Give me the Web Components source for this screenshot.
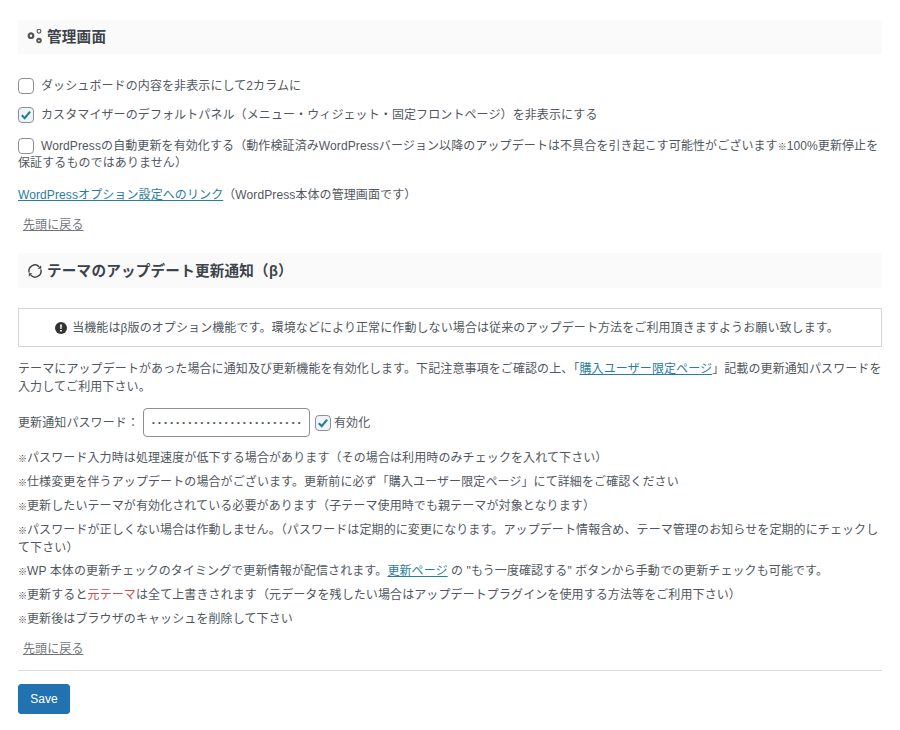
<!DOCTYPE html>
<html lang="ja">
<head>
<meta charset="utf-8">
<title>管理画面</title>
<style>
  body {
    margin: 0;
    padding: 20px 18px 0;
    background: #fff;
    color: #50575e;
    font: 12px/18px "Liberation Sans", "Noto Sans CJK JP", sans-serif;
    letter-spacing: .1px;
  }
  a { color: #2b7d9b; }
  .red { color: #c9504f; }
  .mark { font-size: 9px; line-height: 0; font-weight: 700; letter-spacing: 0; color: #444; }
  section-title[second] { margin-top: 19px; height: 35px; }
  .para { margin: 14px 0 0; }
  .list { margin: 12px 0 0; }
  .list p { margin: 0 0 6px; }
  .list p.wrap { margin-bottom: 5px; }
  .intro { margin: 13px 0 0; }
</style>
</head>
<body>

<section-title>
  <svg slot="icon" width="16" height="16" viewBox="0 0 16 16">
    <g fill="none" stroke="#555">
      <circle cx="4" cy="6.7" r="2.3" stroke-width="2.2"/>
      <circle cx="12" cy="2.2" r="1.9" stroke-width="1.1"/>
      <circle cx="12" cy="11.6" r="1.8" stroke-width="1.9"/>
    </g>
  </svg>
  管理画面
</section-title>

<check-row style="margin-top:23px">ダッシュボードの内容を非表示にして2カラムに</check-row>
<check-row checked style="margin-top:11px">カスタマイザーのデフォルトパネル（メニュー・ウィジェット・固定フロントページ）を非表示にする</check-row>
<check-row style="margin-top:14px;line-height:17px">WordPressの自動更新を有効化する（動作検証済みWordPressバージョン以降のアップデートは不具合を引き起こす可能性がございます<span class="mark">※</span>100%更新停止を保証するものではありません）</check-row>

<p class="para"><a href="#">WordPressオプション設定へのリンク</a>（WordPress本体の管理画面です）</p>
<back-link style="margin-top:12px"></back-link>

<section-title second>
  <svg slot="icon" width="16" height="16" viewBox="0 0 16 16">
    <g fill="none" stroke="#444" stroke-width="1.4">
      <path d="M2.2 9.6A6 6 0 0 1 12.2 3.7"/>
      <path d="M13.8 6.4A6 6 0 0 1 3.8 12.3"/>
    </g>
    <path d="M14.2 2.2v3.6h-3.6zM1.8 13.8v-3.6h3.6z" fill="#444"/>
  </svg>
  テーマのアップデート更新通知（β）
</section-title>

<notice-box>当機能はβ版のオプション機能です。環境などにより正常に作動しない場合は従来のアップデート方法をご利用頂きますようお願い致します。</notice-box>

<p class="intro">テーマにアップデートがあった場合に通知及び更新機能を有効化します。下記注意事項をご確認の上、「<a href="#">購入ユーザー限定ページ</a>」記載の更新通知パスワードを入力してご利用下さい。</p>

<password-row>更新通知パスワード：</password-row>

<div class="list">
  <p><span class="mark">※</span>パスワード入力時は処理速度が低下する場合があります（その場合は利用時のみチェックを入れて下さい）</p>
  <p><span class="mark">※</span>仕様変更を伴うアップデートの場合がございます。更新前に必ず「購入ユーザー限定ページ」にて詳細をご確認ください</p>
  <p><span class="mark">※</span>更新したいテーマが有効化されている必要があります（子テーマ使用時でも親テーマが対象となります）</p>
  <p class="wrap"><span class="mark">※</span>パスワードが正しくない場合は作動しません。（パスワードは定期的に変更になります。アップデート情報含め、テーマ管理のお知らせを定期的にチェックして下さい）</p>
  <p><span class="mark">※</span>WP 本体の更新チェックのタイミングで更新情報が配信されます。<a href="#">更新ページ</a> の "もう一度確認する" ボタンから手動での更新チェックも可能です。</p>
  <p><span class="mark">※</span>更新すると<span class="red">元テーマ</span>は全て上書きされます（元データを残したい場合はアップデートプラグインを使用する方法等をご利用下さい）</p>
  <p><span class="mark">※</span>更新後はブラウザのキャッシュを削除して下さい</p>
</div>

<back-link style="margin-top:12px"></back-link>
<save-bar></save-bar>

<script>
window.customElements.define('section-title', class extends HTMLElement {
  constructor() {
    super();

    const shadowRoot = this.attachShadow({mode: 'open'});
    shadowRoot.innerHTML = `
      <style>
        :host {
          display: flex;
          align-items: center;
          gap: 4px;
          height: 34px;
          padding-left: 9px;
          background: #fafafa;
          color: #3c434a;
          font-size: 14.6px;
          font-weight: 700;
          letter-spacing: .2px;
        }
        ::slotted(svg) { flex: none; }
      </style>
      <slot name="icon"></slot>
      <slot></slot>
    `;
  }
});

window.customElements.define('check-box', class extends HTMLElement {
  constructor() {
    super();

    const shadowRoot = this.attachShadow({mode: 'open'});
    shadowRoot.innerHTML = `
      <style>
        :host {
          display: inline-block;
          box-sizing: border-box;
          width: 16px;
          height: 16px;
          border: 1px solid #8c8f94;
          border-radius: 4px;
          background: #fff;
          vertical-align: -4px;
        }
        :host([checked]) { background: #eef4f7; }
        svg { display: none; width: 14px; height: 14px; }
        :host([checked]) svg { display: block; }
      </style>
      <svg viewBox="0 0 14 14"><path d="M2.8 7.2l2.9 3 5.4-6.6" fill="none" stroke="#2a7c96" stroke-width="2.2"/></svg>
    `;
  }
});

window.customElements.define('check-row', class extends HTMLElement {
  constructor() {
    super();

    const checked = this.hasAttribute('checked') ? 'checked' : '';
    const shadowRoot = this.attachShadow({mode: 'open'});
    shadowRoot.innerHTML = `
      <style>
        :host { display: block; }
        check-box { margin-right: 7px; }
      </style>
      <check-box ${checked}></check-box><slot></slot>
    `;
  }
});

window.customElements.define('back-link', class extends HTMLElement {
  constructor() {
    super();

    const shadowRoot = this.attachShadow({mode: 'open'});
    shadowRoot.innerHTML = `
      <style>
        :host { display: block; padding-left: 5px; }
        a { color: #72777c; }
      </style>
      <a href="#">先頭に戻る</a>
    `;
  }
});

window.customElements.define('notice-box', class extends HTMLElement {
  constructor() {
    super();

    const shadowRoot = this.attachShadow({mode: 'open'});
    shadowRoot.innerHTML = `
      <style>
        :host {
          display: flex;
          justify-content: center;
          align-items: center;
          gap: 5px;
          box-sizing: border-box;
          height: 39px;
          margin-top: 20px;
          border: 1px solid #d5d5d5;
          padding-right: 6px;
        }
        svg { flex: none; }
      </style>
      <svg width="12" height="12" viewBox="0 0 12 12">
        <circle cx="6" cy="6" r="6" fill="#333"/>
        <path d="M5.1 2.6h1.8l-.3 4.4H5.4zM5.1 8h1.8v1.6H5.1z" fill="#fff"/>
      </svg>
      <span><slot></slot></span>
    `;
  }
});

window.customElements.define('password-row', class extends HTMLElement {
  constructor() {
    super();

    const shadowRoot = this.attachShadow({mode: 'open'});
    shadowRoot.innerHTML = `
      <style>
        :host {
          display: flex;
          align-items: center;
          margin-top: 12px;
        }
        input {
          box-sizing: border-box;
          width: 167px;
          height: 29px;
          margin: 0 5px 0 4px;
          padding: 0 8px;
          border: 1px solid #8c8f94;
          border-radius: 4px;
          background: #fff;
          color: #50575e;
          font: 8px "Liberation Sans", sans-serif;
          letter-spacing: 3.27px;
        }
        check-box { margin-right: 3px; }
      </style>
      <slot></slot>
      <input type="password" value="abcdefghijklmnopqrstuvwxyz">
      <check-box checked></check-box>
      <span>有効化</span>
    `;
  }
});

window.customElements.define('save-bar', class extends HTMLElement {
  constructor() {
    super();

    const shadowRoot = this.attachShadow({mode: 'open'});
    shadowRoot.innerHTML = `
      <style>
        :host {
          display: block;
          margin-top: 12px;
          border-top: 1px solid #dcdcde;
          padding-top: 13px;
        }
        button {
          display: block;
          width: 52px;
          height: 30px;
          padding: 0;
          border: 1px solid #2271b1;
          border-radius: 3px;
          background: #2271b1;
          color: #fff;
          font: 12px "Liberation Sans", sans-serif;
        }
      </style>
      <button>Save</button>
    `;
  }
});
</script>
</body>
</html>
